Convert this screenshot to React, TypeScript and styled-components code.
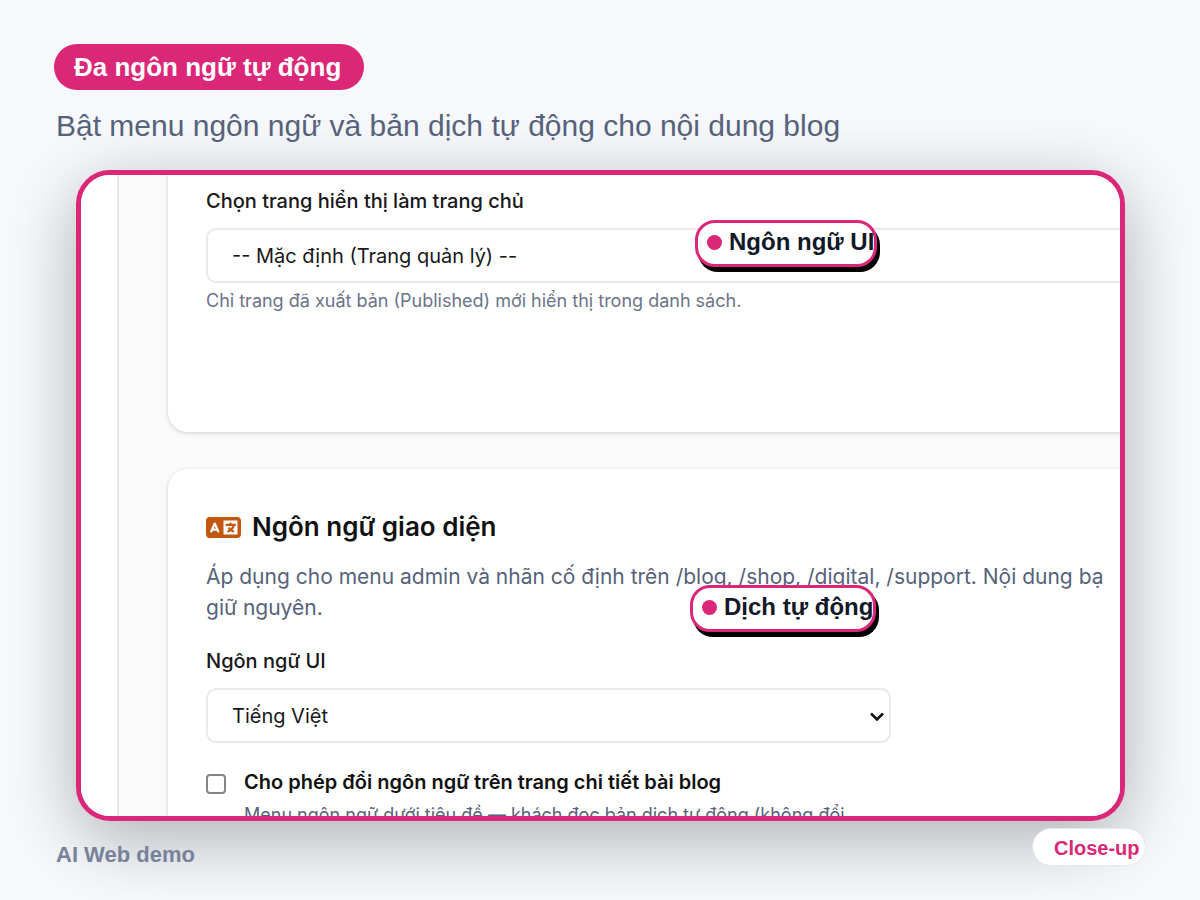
import React from "react";
import styled, { createGlobalStyle } from "styled-components";
import { FaLanguage } from "react-icons/fa6";

const pink = "#db2777";

const GlobalStyle = createGlobalStyle`
  *, *::before, *::after { box-sizing: border-box; }
  body { margin: 0; background: #f7f9fd; }
`;

const Page = styled.main`
  height: 100vh;
  min-height: 600px;
  display: flex;
  flex-direction: column;
  padding: 44px 54px 30px;
  overflow: hidden;
  background: #f7f9fd;
  font-family: "Liberation Sans", Arial, sans-serif;
`;

const Header = styled.header`
  position: relative;
  z-index: 1;
  display: flex;
  flex-direction: column;
  align-items: flex-start;
  gap: 18px;
`;

const Title = styled.h1`
  margin: 0;
  padding: 0 23px 0 20px;
  border-radius: 23px;
  background: ${pink};
  color: #fff;
  font-size: 26px;
  line-height: 46px;
  font-weight: 700;
`;

const Subtitle = styled.p`
  margin: 0;
  padding-left: 2px;
  color: #56627a;
  font-size: 30px;
  line-height: 36px;
`;

const Stage = styled.section`
  position: relative;
  flex: 1;
  min-height: 0;
  display: flex;
  margin: 26px 21px 7px 22px;
`;

const Frame = styled.div`
  flex: 1;
  min-width: 0;
  display: flex;
  overflow: hidden;
  border: 5px solid ${pink};
  border-radius: 34px;
  background: #fafafa;
  box-shadow: 0 18px 72px rgba(0, 0, 0, 0.3);
  font-family: Inter, sans-serif;
`;

const SideRail = styled.div`
  flex: 0 0 38px;
  border-right: 2px solid #e9eaee;
  background: #fff;
`;

const Content = styled.div`
  flex: 0 0 1240px;
  display: flex;
  flex-direction: column;
  gap: 37px;
  padding-left: 49px;
`;

const Card = styled.section<{ $continued?: boolean }>`
  flex: none;
  padding: ${(p) => (p.$continued ? "11px 38px 117px" : "38px 38px 40px")};
  border-radius: ${(p) => (p.$continued ? "0 0 20px 20px" : "20px")};
  background: #fff;
  box-shadow: 0 1px 4px rgba(0, 0, 0, 0.18);
`;

const FieldLabel = styled.label`
  display: block;
  margin-bottom: 12px;
  color: #18181b;
  font-size: 20px;
  line-height: 30px;
  font-weight: 500;
`;

const SelectBox = styled.div<{ $width?: string }>`
  position: relative;
  width: ${(p) => p.$width ?? "100%"};
`;

const Select = styled.select`
  display: block;
  width: 100%;
  height: 55px;
  padding: 0 24px;
  appearance: none;
  border: 2px solid #e9e9e9;
  border-radius: 10px;
  background: #fff;
  color: #18181b;
  font-family: inherit;
  font-size: 20px;
`;

const Chevron = styled.svg`
  position: absolute;
  right: 7px;
  top: 50%;
  margin-top: -4px;
  pointer-events: none;
`;

const Hint = styled.p`
  margin: 4px 0 0;
  color: #6b7489;
  font-size: 18px;
  line-height: 28px;
`;

const SectionTitle = styled.h2`
  display: flex;
  align-items: center;
  gap: 11px;
  margin: 0 0 14px;
  color: #111;
  font-size: 26px;
  line-height: 40px;
  font-weight: 600;

  svg { flex: none; color: #c2570f; }
`;

const Description = styled.p`
  margin: 0 0 23px;
  color: #56627a;
  font-size: 21px;
  line-height: 31px;
  white-space: nowrap;
`;

const CheckRow = styled.div`
  display: flex;
  align-items: flex-start;
  gap: 18px;
  margin-top: 24px;
`;

const Checkbox = styled.input`
  appearance: none;
  flex: none;
  width: 20px;
  height: 20px;
  margin: 7px 0 0;
  border: 2px solid #858585;
  border-radius: 4px;
  background: #fff;

  &:checked { background: ${pink}; }
`;

const CheckLabel = styled.label`
  display: block;
  color: #111;
  font-size: 20px;
  line-height: 30px;
  font-weight: 600;
`;

const CheckNote = styled.p`
  margin: 4px 0 0;
  color: #56627a;
  font-size: 18px;
  line-height: 28px;
`;

const Callout = styled.div<{ $top: number; $left: number; $width: number }>`
  position: absolute;
  top: ${(p) => p.$top}px;
  left: ${(p) => p.$left}px;
  width: ${(p) => p.$width}px;
  height: 47px;
  display: flex;
  align-items: center;
  gap: 7px;
  padding: 0 0 3px 9px;
  border: 3px solid ${pink};
  border-radius: 20px;
  background: #fff;
  box-shadow: 3px 5px 0 #000;
  color: #111827;
  font-size: 24px;
  line-height: 28px;
  font-weight: 700;
  white-space: nowrap;
`;

const Dot = styled.span`
  flex: none;
  width: 15px;
  height: 15px;
  border-radius: 50%;
  background: ${pink};
`;

const Footer = styled.footer`
  position: relative;
  z-index: 1;
  display: flex;
  justify-content: space-between;
  align-items: flex-start;
  padding-left: 2px;
`;

const Brand = styled.span`
  margin-top: 12px;
  color: #76829a;
  font-size: 22px;
  line-height: 30px;
  font-weight: 700;
`;

const Tag = styled.span`
  width: 114px;
  height: 38px;
  padding-left: 21px;
  border: 1px solid #e2e8f0;
  border-radius: 19px;
  background: #fff;
  color: ${pink};
  font-size: 20px;
  line-height: 38px;
  font-weight: 700;
  white-space: nowrap;
`;

export default function App() {
  return (
    <>
      <GlobalStyle />
      <Page>
        <Header>
          <Title>Đa ngôn ngữ tự động</Title>
          <Subtitle>Bật menu ngôn ngữ và bản dịch tự động cho nội dung blog</Subtitle>
        </Header>
        <Stage>
          <Frame>
            <SideRail />
            <Content>
              <Card $continued>
                <FieldLabel htmlFor="home">Chọn trang hiển thị làm trang chủ</FieldLabel>
                <SelectBox>
                  <Select id="home">
                    <option>-- Mặc định (Trang quản lý) --</option>
                  </Select>
                </SelectBox>
                <Hint>Chỉ trang đã xuất bản (Published) mới hiển thị trong danh sách.</Hint>
              </Card>
              <Card>
                <SectionTitle>
                  <FaLanguage size={35} />
                  Ngôn ngữ giao diện
                </SectionTitle>
                <Description>
                  Áp dụng cho menu admin và nhãn cố định trên /blog, /shop, /digital, /support. Nội dung bạ
                  <br />
                  giữ nguyên.
                </Description>
                <FieldLabel htmlFor="lang">Ngôn ngữ UI</FieldLabel>
                <SelectBox $width="685px">
                  <Select id="lang">
                    <option>Tiếng Việt</option>
                  </Select>
                  <Chevron width="14" height="10" viewBox="0 0 14 10" fill="none" stroke="#111" strokeWidth="2.6">
                    <path d="M1 1.5 7 7.5 13 1.5" />
                  </Chevron>
                </SelectBox>
                <CheckRow>
                  <Checkbox type="checkbox" id="allow" />
                  <div>
                    <CheckLabel htmlFor="allow">Cho phép đổi ngôn ngữ trên trang chi tiết bài blog</CheckLabel>
                    <CheckNote>Menu ngôn ngữ dưới tiêu đề — khách đọc bản dịch tự động (không đổi</CheckNote>
                  </div>
                </CheckRow>
              </Card>
            </Content>
          </Frame>
          <Callout $top={50} $left={619} $width={182}>
            <Dot />
            Ngôn ngữ UI
          </Callout>
          <Callout $top={415} $left={614} $width={186}>
            <Dot />
            Dịch tự động
          </Callout>
        </Stage>
        <Footer>
          <Brand>AI Web demo</Brand>
          <Tag>Close-up</Tag>
        </Footer>
      </Page>
    </>
  );
}
